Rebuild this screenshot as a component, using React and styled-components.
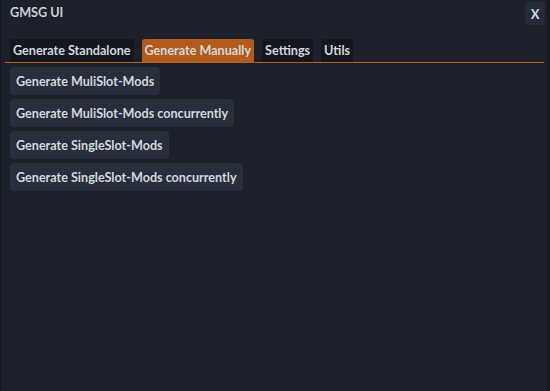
import React, { useState } from 'react';
import styled, { createGlobalStyle } from 'styled-components';

const GlobalStyle = createGlobalStyle`
  html, body {
    margin: 0;
    padding: 0;
    background: #1b202a;
  }
  * { box-sizing: border-box; }
`;

const Window = styled.div`
  width: 550px;
  height: 391px;
  background: #1b202a;
  border-left: 1px solid #12161d;
  border-right: 3px solid #151920;
  font-family: Lato, "Open Sans", sans-serif;
  font-weight: 700;
  color: #d4d7de;
  display: flex;
  flex-direction: column;
  overflow: hidden;
`;

const TitleBar = styled.div`
  height: 28px;
  display: flex;
  align-items: flex-start;
  justify-content: space-between;
  padding: 2px 2px 0 9px;
`;

const Title = styled.span`
  font-size: 12.6px;
  line-height: 21px;
  color: #cdd1d9;
`;

const CloseButton = styled.button`
  width: 20px;
  height: 23px;
  border: none;
  border-radius: 4px;
  background: #252b38;
  color: #d4d7de;
  font-family: inherit;
  font-weight: 700;
  font-size: 13px;
  padding: 0;
  cursor: pointer;
`;

const Body = styled.div`
  padding: 11px 4px 0 4px;
  display: flex;
  flex-direction: column;
`;

const TabBar = styled.div`
  display: flex;
  gap: 8px;
  padding: 0 5px;
  border-bottom: 1px solid #b4601f;
  width: 539px;
`;

const Tab = styled.button`
  height: 23px;
  border: none;
  border-radius: 3px 3px 0 0;
  padding: 0 3px;
  background: ${props => (props.active ? '#b35a1d' : '#12161e')};
  color: #d4d7de;
  font-family: inherit;
  font-weight: 700;
  font-size: 12.6px;
  cursor: pointer;
`;

const ActionList = styled.div`
  display: flex;
  flex-direction: column;
  align-items: flex-start;
  gap: 4px;
  padding: 4px 5px 0;
`;

const ActionButton = styled.button`
  height: 28px;
  border: none;
  border-radius: 4px;
  background: #282e3c;
  color: #d4d7de;
  font-family: inherit;
  font-weight: 700;
  font-size: 12.6px;
  padding: 0 6px;
  cursor: pointer;
`;

const tabs = ['Generate Standalone', 'Generate Manually', 'Settings', 'Utils'];

const actions = [
  'Generate MuliSlot-Mods',
  'Generate MuliSlot-Mods concurrently',
  'Generate SingleSlot-Mods',
  'Generate SingleSlot-Mods concurrently',
];

export default function App() {
  const [current, setCurrent] = useState(1);

  return (
    <>
      <GlobalStyle />
      <Window>
        <TitleBar>
          <Title>GMSG UI</Title>
          <CloseButton>X</CloseButton>
        </TitleBar>
        <Body>
          <TabBar>
            {tabs.map((t, i) => (
              <Tab key={t} active={i === current} onClick={() => setCurrent(i)}>
                {t}
              </Tab>
            ))}
          </TabBar>
          <ActionList>
            {actions.map(a => (
              <ActionButton key={a}>{a}</ActionButton>
            ))}
          </ActionList>
        </Body>
      </Window>
    </>
  );
}
